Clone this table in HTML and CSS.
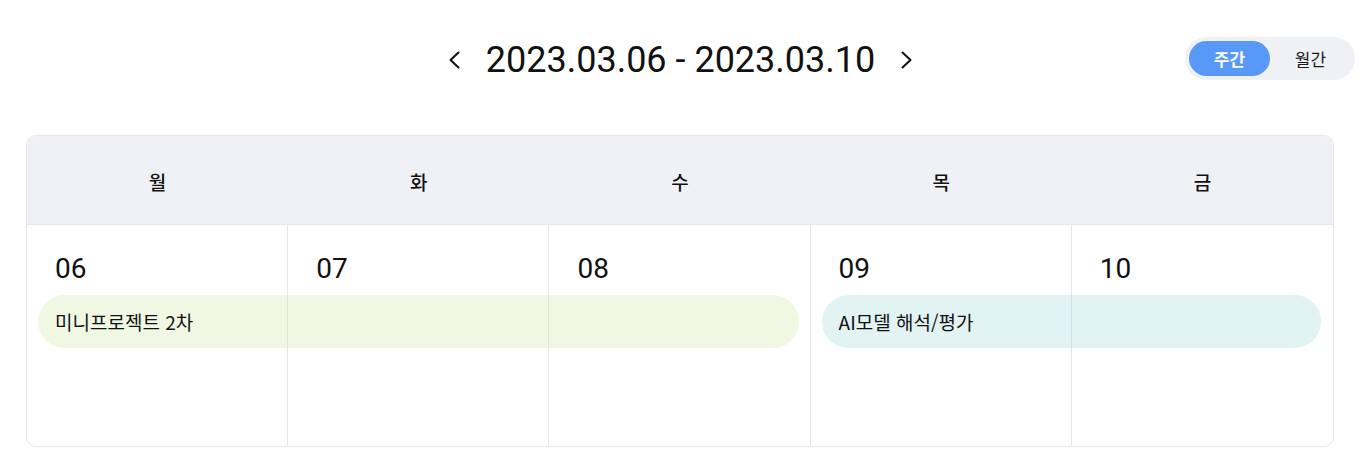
FILE: index.html
```html
<!DOCTYPE html>
<html lang="ko">
<head>
<meta charset="utf-8">
<link rel="stylesheet" href="styles.css">
</head>
<body>
<div class="page">
  <header class="topbar">
    <div class="spacer"></div>
    <div class="range">
      <button class="nav" aria-label="이전">
        <svg width="12" height="18" viewBox="0 0 12 18"><path d="M10.5 1.5 L2.5 9 L10.5 16.5" fill="none" stroke="#111" stroke-width="2" stroke-linecap="round" stroke-linejoin="round"/></svg>
      </button>
      <h1 class="title">2023.03.06 - 2023.03.10</h1>
      <button class="nav" aria-label="다음">
        <svg width="12" height="18" viewBox="0 0 12 18"><path d="M1.5 1.5 L9.5 9 L1.5 16.5" fill="none" stroke="#111" stroke-width="2" stroke-linecap="round" stroke-linejoin="round"/></svg>
      </button>
    </div>
    <div class="toggle-wrap">
      <div class="toggle">
        <span class="opt active">주간</span>
        <span class="opt">월간</span>
      </div>
    </div>
  </header>

  <section class="calendar">
    <div class="head">
      <div class="dow">월</div>
      <div class="dow">화</div>
      <div class="dow">수</div>
      <div class="dow">목</div>
      <div class="dow">금</div>
    </div>
    <div class="body">
      <div class="cell c1"><span class="date">06</span></div>
      <div class="cell c2"><span class="date">07</span></div>
      <div class="cell c3"><span class="date">08</span></div>
      <div class="cell c4"><span class="date">09</span></div>
      <div class="cell c5"><span class="date">10</span></div>
      <div class="event ev-green">미니프로젝트 2차</div>
      <div class="event ev-teal">AI모델 해석/평가</div>
    </div>
  </section>
</div>
</body>
</html>
```

FILE: styles.css
```css
* { box-sizing: border-box; }
html, body { margin: 0; padding: 0; background: #fff; }
body {
  font-family: Roboto, "Noto Sans CJK KR", sans-serif;
  color: #111;
}
.page {
  padding: 37px 10px 0 26px;
}
.topbar {
  display: grid;
  grid-template-columns: 1fr auto 1fr;
  align-items: center;
  height: 43px;
}
.range {
  display: flex;
  align-items: center;
  gap: 26px;
  margin-left: -20px;
  padding-top: 2px;
}
.nav {
  border: 0;
  background: none;
  padding: 0;
  width: 12px;
  height: 18px;
  display: flex;
  cursor: pointer;
}
.title {
  margin: 0;
  font-family: Roboto, sans-serif;
  font-weight: 400;
  font-size: 36px;
  color: #111;
  line-height: 1;
}
.toggle-wrap {
  display: flex;
  justify-content: flex-end;
}
.toggle {
  display: flex;
  align-items: center;
  background: #f0f1f7;
  border-radius: 22px;
  padding: 3px 4px;
  height: 43px;
}
.opt {
  width: 81px;
  height: 35px;
  border-radius: 18px;
  display: flex;
  align-items: center;
  justify-content: center;
  font-family: "Noto Sans CJK KR", sans-serif;
  font-size: 17px;
  font-weight: 400;
  color: #1a1a1a;
}
.opt.active {
  background: #5898f7;
  color: #fff;
  font-weight: 700;
}
.calendar {
  margin-top: 55px;
  width: 1308px;
  border: 1px solid #e6e6ef;
  border-radius: 10px;
  overflow: hidden;
}
.head {
  display: grid;
  grid-template-columns: repeat(5, 1fr);
  background: #f0f1f7;
  height: 89px;
  border-bottom: 1px solid #e6e6ef;
}
.dow {
  display: flex;
  align-items: center;
  justify-content: center;
  font-family: "Noto Sans CJK KR", sans-serif;
  font-size: 19px;
  font-weight: 500;
  color: #111;
  padding-top: 2px;
}
.body {
  display: grid;
  grid-template-columns: repeat(5, 1fr);
  grid-template-rows: 70px 53px 98px;
}
.cell {
  grid-row: 1 / 4;
  border-right: 1px solid #e6e6ef;
  padding: 30px 0 0 28px;
}
.cell.c5 { border-right: 0; }
.c1 { grid-column: 1; }
.c2 { grid-column: 2; }
.c3 { grid-column: 3; }
.c4 { grid-column: 4; }
.c5 { grid-column: 5; }
.date {
  font-family: Roboto, sans-serif;
  font-size: 28px;
  line-height: 1;
  color: #111;
}
.event {
  grid-row: 2;
  z-index: 1;
  border-radius: 27px;
  display: flex;
  align-items: center;
  padding-left: 17px;
  font-family: "Noto Sans CJK KR", sans-serif;
  font-size: 19px;
  color: #111;
}
.ev-green {
  grid-column: 1 / 4;
  margin: 0 12px 0 11px;
  background: rgba(200, 228, 150, 0.27);
}
.ev-teal {
  grid-column: 4 / 6;
  margin: 0 12px 0 11px;
  background: rgba(160, 214, 214, 0.3);
}
```
